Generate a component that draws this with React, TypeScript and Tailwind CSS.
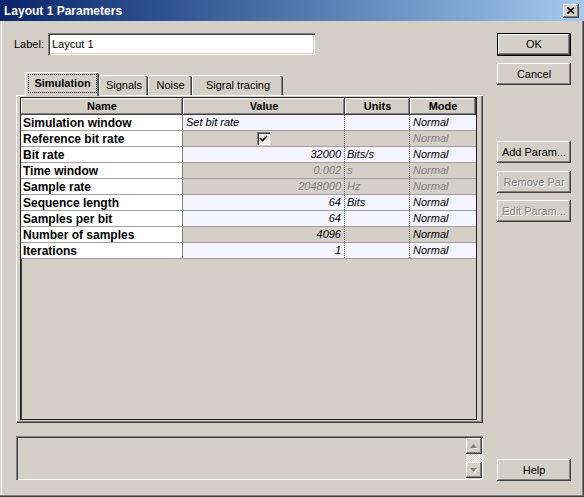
import React from 'react';

type Row = {
  name: string;
  value?: string;
  units?: string;
  gray?: boolean;
  dim?: boolean;
  left?: boolean;
  check?: boolean;
};

const rows: Row[] = [
  { name: 'Simulation window', value: 'Set bit rate', left: true },
  { name: 'Reference bit rate', check: true, gray: true, dim: true },
  { name: 'Bit rate', value: '32000', units: 'Bits/s' },
  { name: 'Time window', value: '0.002', units: 's', gray: true, dim: true },
  { name: 'Sample rate', value: '2048000', units: 'Hz', gray: true, dim: true },
  { name: 'Sequence length', value: '64', units: 'Bits' },
  { name: 'Samples per bit', value: '64' },
  { name: 'Number of samples', value: '4096', gray: true },
  { name: 'Iterations', value: '1' },
];

const raised =
  'shadow-[inset_-1px_-1px_#404040,inset_1px_1px_#ffffff,inset_-2px_-2px_#808080]';
const sunken =
  'shadow-[inset_1px_1px_#808080,inset_2px_2px_#404040,inset_-1px_-1px_#ffffff,inset_-2px_-2px_#d4d0c8]';

function Btn({ label, disabled, def, cls }: { label: string; disabled?: boolean; def?: boolean; cls: string }) {
  if (def) {
    return (
      <div className={`${cls} w-[74px] border border-black bg-[#d4d0c8]`}>
        <div className={`h-full w-full flex items-center justify-center text-[11px] text-black ${raised}`}>{label}</div>
      </div>
    );
  }
  return (
    <div
      className={`${cls} w-[74px] bg-[#d4d0c8] flex items-center justify-center text-[11px] ${raised} ${
        disabled ? 'text-[#808080] [text-shadow:1px_1px_0_#ffffff]' : 'text-black'
      }`}
    >
      {label}
    </div>
  );
}

function Arrow({ up }: { up?: boolean }) {
  return (
    <div className={`h-[16px] w-[16px] bg-[#d4d0c8] flex items-center justify-center ${raised}`}>
      <svg width="8" height="5" viewBox="0 0 8 5">
        {up ? (
          <>
            <path d="M1 5 L4 1 L7 5 Z" fill="#ffffff" transform="translate(1,1)" />
            <path d="M0 4 L3.5 0 L7 4 Z" fill="#808080" />
          </>
        ) : (
          <>
            <path d="M1 1 L4 5 L7 1 Z" fill="#ffffff" transform="translate(1,0)" />
            <path d="M0 0 L3.5 4 L7 0 Z" fill="#808080" />
          </>
        )}
      </svg>
    </div>
  );
}

export default function App() {
  return (
    <div
      className={`w-[584px] h-[497px] bg-[#d4d0c8] flex flex-col overflow-hidden font-['Liberation_Sans',Arial,sans-serif] shadow-[inset_-1px_-1px_#404040,inset_-2px_-2px_#808080,inset_1px_1px_#d4d0c8,inset_2px_2px_#ffffff]`}
    >
      {/* Title bar */}
      <div className="h-[21px] shrink-0 flex items-center justify-between bg-gradient-to-r from-[#0a246a] to-[#a6caf0] pl-[4px] pr-[5px]">
        <span className="text-white font-bold text-[12px] leading-none">Layout 1 Parameters</span>
        <div className={`w-[16px] h-[14px] bg-[#d4d0c8] flex items-center justify-center ${raised}`}>
          <svg width="8" height="7" viewBox="0 0 8 7">
            <path d="M0.5 0.5 L7 6.5 M7 0.5 L0.5 6.5" stroke="#000" strokeWidth="1.6" />
          </svg>
        </div>
      </div>

      <div className="flex flex-1">
        {/* Left column */}
        <div className="ml-[16px] w-[467px] flex flex-col">
          <div className="mt-[12px] flex items-center h-[22px]">
            <span className="-ml-[2px] w-[34px] text-[11px] text-black">Label:</span>
            <div className={`w-[267px] h-[22px] bg-white flex items-center pl-[4px] text-[11px] text-black ${sunken}`}>
              Laycut 1
            </div>
          </div>

          {/* Tabs */}
          <div className="mt-[17px] h-[23px] flex items-end pl-[9px]">
            <div className="relative z-10 -mb-[1px] h-[24px] w-[74px] bg-[#d4d0c8] rounded-t-[2px] border-t border-l border-white shadow-[inset_-1px_0_#404040,inset_-2px_0_#808080] flex items-start pt-[1px] px-[2px]">
              <div className="h-[19px] w-full border border-dotted border-black flex items-center justify-center text-[11px] font-bold text-black">
                Simulation
              </div>
            </div>
            <div className="h-[20px] w-[49px] rounded-t-[2px] border-t border-l border-white shadow-[inset_-1px_0_#404040,inset_-2px_0_#808080] flex items-center justify-center text-[11px] text-black">
              Signals
            </div>
            <div className="h-[20px] w-[44px] rounded-t-[2px] border-t border-l border-white shadow-[inset_-1px_0_#404040,inset_-2px_0_#808080] flex items-center justify-center text-[11px] text-black">
              Noise
            </div>
            <div className="h-[20px] w-[91px] rounded-t-[2px] border-t border-l border-white shadow-[inset_-1px_0_#404040,inset_-2px_0_#808080] flex items-center justify-center text-[11px] text-black">
              Sigral tracing
            </div>
          </div>

          {/* Panel */}
          <div className="h-[328px] bg-[#d4d0c8] pt-[2px] pl-[4px] pr-[6px] pb-[3px] shadow-[inset_1px_1px_#ffffff,inset_-1px_-1px_#404040,inset_-2px_-2px_#808080]">
            <div className="h-full w-[457px] border border-[#202020] bg-[#d4d0c8] shadow-[inset_1px_1px_#404040]">
              {/* Header */}
              <div className="flex h-[17px] text-[11px] font-bold text-black">
                <div className={`w-[162px] bg-[#d4d0c8] flex items-center justify-center ${raised}`}>Name</div>
                <div className={`w-[162px] bg-[#d4d0c8] flex items-center justify-center ${raised}`}>Value</div>
                <div className={`w-[65px] bg-[#d4d0c8] flex items-center justify-center ${raised}`}>Units</div>
                <div className={`w-[66px] bg-[#d4d0c8] flex items-center justify-center ${raised}`}>Mode</div>
              </div>
              {rows.map((r) => (
                <div key={r.name} className="flex h-[16px] text-[11px] border-b border-[#a0a0a0]">
                  <div className="w-[162px] bg-white border-r border-[#808080] flex items-center pl-[2px] text-[12px] font-bold text-black whitespace-nowrap">
                    {r.name}
                  </div>
                  <div
                    className={`w-[162px] border-r border-dotted border-[#606060] flex items-center italic ${
                      r.gray ? 'bg-[#d4d0c8]' : 'bg-[#f4f4ff]'
                    } ${r.dim ? 'text-[#808080]' : 'text-black'} ${
                      r.check ? 'justify-center' : r.left ? 'justify-start pl-[3px]' : 'justify-end pr-[3px]'
                    }`}
                  >
                    {r.check ? (
                      <div className="w-[13px] h-[13px] bg-[#ecebe6] shadow-[inset_1px_1px_#808080,inset_2px_2px_#404040,inset_-1px_-1px_#ffffff] flex items-center justify-center">
                        <svg width="9" height="9" viewBox="0 0 9 9">
                          <path d="M1 4 L3.5 6.5 L8 2" stroke="#000" strokeWidth="1.6" fill="none" />
                        </svg>
                      </div>
                    ) : (
                      r.value
                    )}
                  </div>
                  <div
                    className={`w-[65px] border-r border-dotted border-[#606060] flex items-center pl-[2px] italic ${
                      r.gray ? 'bg-[#d4d0c8]' : 'bg-[#f4f4ff]'
                    } ${r.dim ? 'text-[#808080]' : 'text-black'}`}
                  >
                    {r.units}
                  </div>
                  <div
                    className={`w-[66px] flex items-center pl-[3px] italic ${
                      r.gray ? 'bg-[#d4d0c8]' : 'bg-[#f4f4ff]'
                    } ${r.dim ? 'text-[#808080]' : 'text-black'}`}
                  >
                    Normal
                  </div>
                </div>
              ))}
            </div>
          </div>

          {/* Lower box */}
          <div className={`mt-[13px] h-[44px] bg-[#d4d0c8] flex justify-end p-[2px] pr-[1px] ${sunken}`}>
            <div className="w-[16px] flex flex-col">
              <Arrow up />
              <div className="flex-1 [background-image:repeating-conic-gradient(#ffffff_0_25%,#d4d0c8_0_50%)] [background-size:2px_2px]" />
              <Arrow />
            </div>
          </div>
        </div>

        {/* Right column */}
        <div className="ml-[14px] w-[74px] flex flex-col">
          <Btn label="OK" def cls="mt-[12px] h-[23px]" />
          <Btn label="Cancel" cls="mt-[7px] h-[22px]" />
          <Btn label="Add Param..." cls="mt-[56px] h-[22px]" />
          <Btn label="Remove Par" disabled cls="mt-[8px] h-[22px]" />
          <Btn label="Edit Param..." disabled cls="mt-[7px] h-[22px]" />
          <Btn label="Help" cls="mt-[237px] h-[22px]" />
        </div>
      </div>
    </div>
  );
}
